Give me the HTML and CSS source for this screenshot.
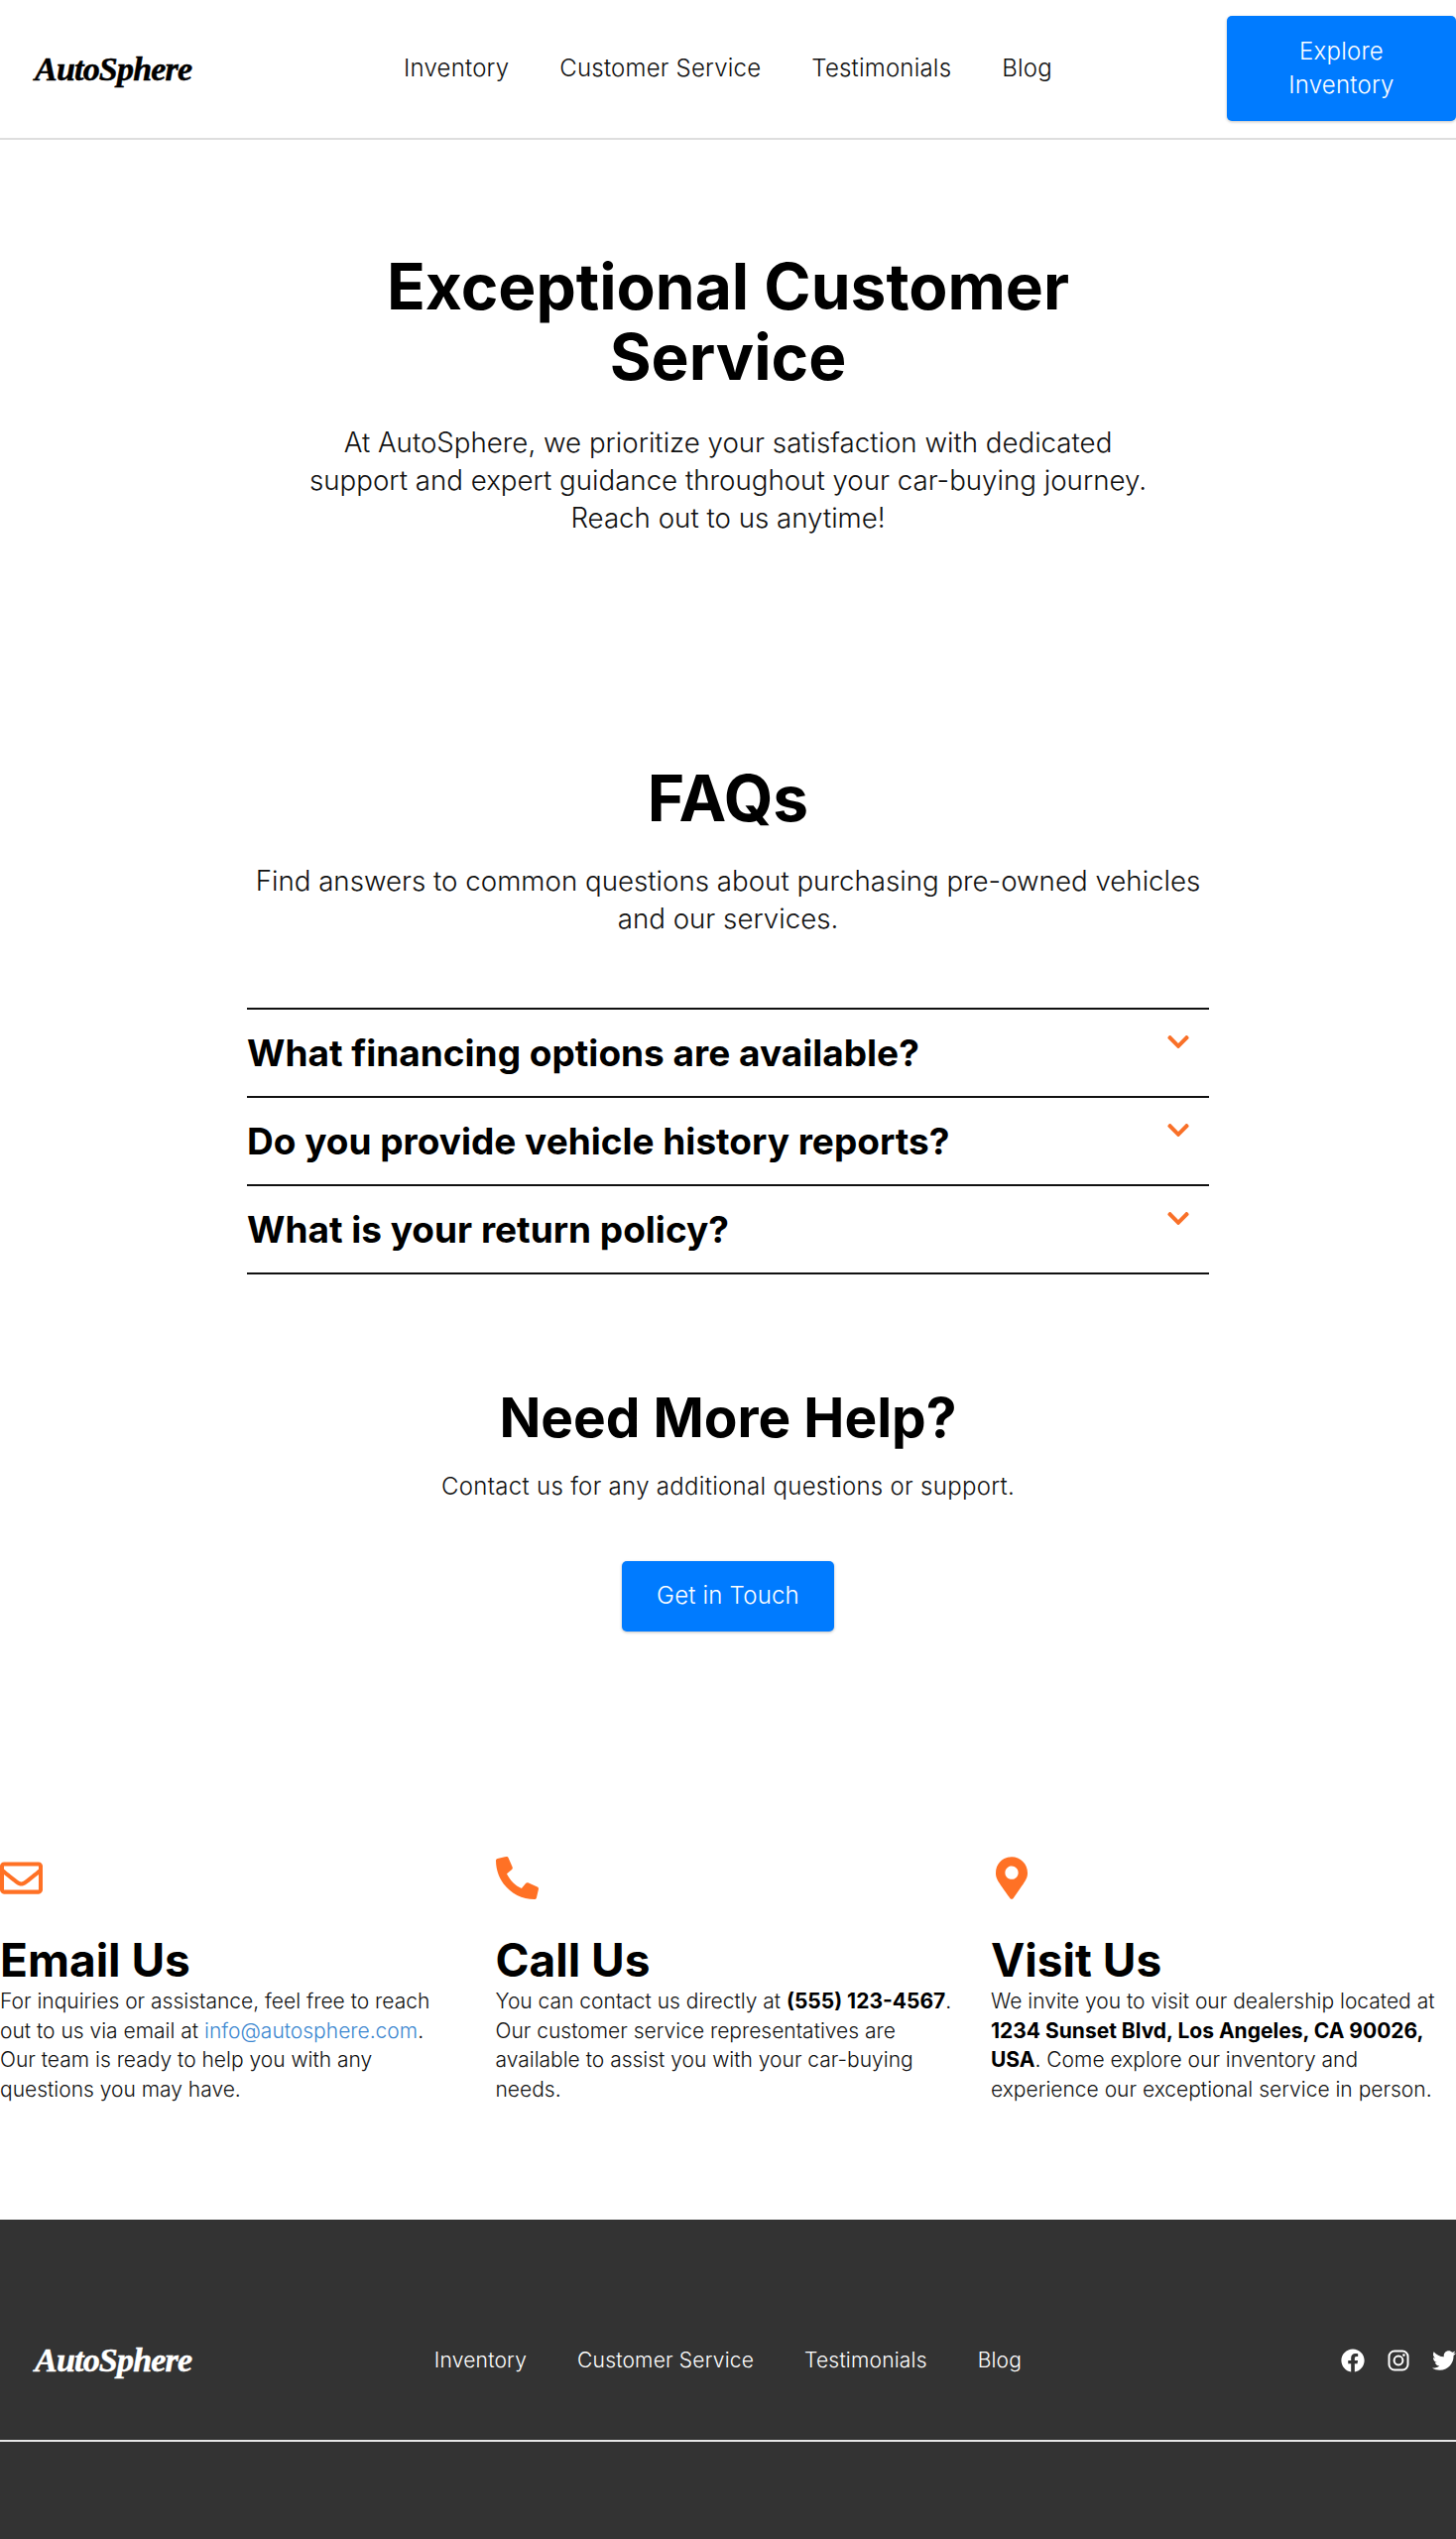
FILE: index.html
```html
<!DOCTYPE html>
<html lang="en">
<head>
    <meta charset="UTF-8">
    <meta name="viewport" content="width=device-width, initial-scale=1.0">
    <title>AutoSphere - Customer Service</title>
    <link rel="stylesheet" href="styles.css">
</head>
<body>
    <header class="navbar">
        <a class="logo" href="#">AutoSphere</a>
        <nav class="nav-links">
            <a href="#">Inventory</a>
            <a href="#">Customer Service</a>
            <a href="#">Testimonials</a>
            <a href="#">Blog</a>
        </nav>
        <a class="btn btn-nav" href="#">Explore Inventory</a>
    </header>

    <section class="hero">
        <h1>Exceptional Customer Service</h1>
        <p>At AutoSphere, we prioritize your satisfaction with dedicated support and expert guidance throughout your car-buying journey. Reach out to us anytime!</p>
    </section>

    <section class="faq">
        <h2>FAQs</h2>
        <p class="faq-intro">Find answers to common questions about purchasing pre-owned vehicles and our services.</p>
        <div class="faq-list">
            <div class="faq-item">
                <h3>What financing options are available?</h3>
                <svg class="chevron" viewBox="0 0 448 512"><path d="M207.029 381.476L12.686 187.132c-9.373-9.373-9.373-24.569 0-33.941l22.667-22.667c9.357-9.357 24.522-9.375 33.901-.04L224 284.505l154.745-154.021c9.379-9.335 24.544-9.317 33.901.04l22.667 22.667c9.373 9.373 9.373 24.569 0 33.941L240.971 381.476c-9.373 9.372-24.569 9.372-33.942 0z"/></svg>
            </div>
            <div class="faq-item">
                <h3>Do you provide vehicle history reports?</h3>
                <svg class="chevron" viewBox="0 0 448 512"><path d="M207.029 381.476L12.686 187.132c-9.373-9.373-9.373-24.569 0-33.941l22.667-22.667c9.357-9.357 24.522-9.375 33.901-.04L224 284.505l154.745-154.021c9.379-9.335 24.544-9.317 33.901.04l22.667 22.667c9.373 9.373 9.373 24.569 0 33.941L240.971 381.476c-9.373 9.372-24.569 9.372-33.942 0z"/></svg>
            </div>
            <div class="faq-item">
                <h3>What is your return policy?</h3>
                <svg class="chevron" viewBox="0 0 448 512"><path d="M207.029 381.476L12.686 187.132c-9.373-9.373-9.373-24.569 0-33.941l22.667-22.667c9.357-9.357 24.522-9.375 33.901-.04L224 284.505l154.745-154.021c9.379-9.335 24.544-9.317 33.901.04l22.667 22.667c9.373 9.373 9.373 24.569 0 33.941L240.971 381.476c-9.373 9.372-24.569 9.372-33.942 0z"/></svg>
            </div>
        </div>
    </section>

    <section class="help">
        <h2>Need More Help?</h2>
        <p>Contact us for any additional questions or support.</p>
        <a class="btn btn-touch" href="#">Get in Touch</a>
    </section>

    <section class="contact">
        <div class="contact-card">
            <svg class="contact-icon" viewBox="0 0 512 512"><path d="M464 64H48C21.49 64 0 85.49 0 112v288c0 26.51 21.49 48 48 48h416c26.51 0 48-21.49 48-48V112c0-26.51-21.49-48-48-48zm0 48v40.805c-22.422 18.259-58.168 46.651-134.587 106.49-16.841 13.247-50.201 45.072-73.413 44.701-23.208.375-56.579-31.459-73.413-44.701C106.18 199.465 70.425 171.067 48 152.805V112h416zM48 400V214.398c22.914 18.251 55.409 43.862 104.938 82.646 21.857 17.205 60.134 55.186 103.062 54.955 42.717.231 80.509-37.199 103.053-54.947 49.528-38.783 82.032-64.401 104.947-82.653V400H48z"/></svg>
            <h3>Email Us</h3>
            <p>For inquiries or assistance, feel free to reach out to us via email at <a href="#">info@autosphere.com</a>. Our team is ready to help you with any questions you may have.</p>
        </div>
        <div class="contact-card">
            <svg class="contact-icon flip" viewBox="0 0 512 512"><path d="M493.4 24.6l-104-24c-11.3-2.6-22.9 3.3-27.5 13.9l-48 112c-4.2 9.8-1.4 21.3 6.9 28l60.6 49.6c-36 76.7-98.9 140.5-177.2 177.2l-49.6-60.6c-6.8-8.3-18.2-11.1-28-6.9l-112 48C3.9 366.5-2 378.1.6 389.4l24 104C27.1 504.2 36.7 512 48 512c256.1 0 464-207.5 464-464 0-11.2-7.7-20.9-18.6-23.4z"/></svg>
            <h3>Call Us</h3>
            <p>You can contact us directly at <strong class="phone">(555) 123-4567</strong>. Our customer service representatives are available to assist you with your car-buying needs.</p>
        </div>
        <div class="contact-card">
            <svg class="contact-icon pin" viewBox="0 0 384 512"><path d="M172.268 501.67C26.97 291.031 0 269.413 0 192 0 85.961 85.961 0 192 0s192 85.961 192 192c0 77.413-26.97 99.031-172.268 309.67-9.535 13.774-29.93 13.773-39.464 0zM192 272c44.183 0 80-35.817 80-80s-35.817-80-80-80-80 35.817-80 80 35.817 80 80 80z"/></svg>
            <h3>Visit Us</h3>
            <p>We invite you to visit our dealership located at <strong>1234 Sunset Blvd, Los Angeles, CA 90026, USA</strong>. Come explore our inventory and experience our exceptional service in person.</p>
        </div>
    </section>

    <footer class="footer">
        <div class="footer-top">
            <a class="logo" href="#">AutoSphere</a>
            <nav class="footer-links">
                <a href="#">Inventory</a>
                <a href="#">Customer Service</a>
                <a href="#">Testimonials</a>
                <a href="#">Blog</a>
            </nav>
            <div class="socials">
                <svg viewBox="0 0 512 512"><path d="M504 256C504 119 393 8 256 8S8 119 8 256c0 123.78 90.69 226.38 209.25 245V327.69h-63V256h63v-54.64c0-62.15 37-96.48 93.67-96.48 27.14 0 55.52 4.84 55.52 4.84v61h-31.28c-30.8 0-40.41 19.12-40.41 38.73V256h68.78l-11 71.69h-57.78V501C413.31 482.38 504 379.78 504 256z"/></svg>
                <svg viewBox="0 0 24 24"><rect class="ig" x="2.5" y="2.5" width="19" height="19" rx="5.5"/><circle class="ig" cx="12" cy="12" r="4.4"/><circle cx="17.4" cy="6.6" r="1.3"/></svg>
                <svg viewBox="0 0 512 512"><path d="M459.37 151.716c.325 4.548.325 9.097.325 13.645 0 138.72-105.583 298.558-298.558 298.558-59.452 0-114.68-17.219-161.137-47.106 8.447.974 16.568 1.299 25.34 1.299 49.055 0 94.213-16.568 130.274-44.832-46.132-.975-84.792-31.188-98.112-72.772 6.498.974 12.995 1.624 19.818 1.624 9.421 0 18.843-1.3 27.614-3.573-48.081-9.747-84.143-51.98-84.143-102.985v-1.299c13.969 7.797 30.214 12.67 47.431 13.319-28.264-18.843-46.781-51.005-46.781-87.391 0-19.492 5.197-37.36 14.294-52.954 51.655 63.675 129.3 105.258 216.365 109.807-1.624-7.797-2.599-15.918-2.599-24.04 0-57.828 46.782-104.934 104.934-104.934 30.213 0 57.502 12.67 76.67 33.137 23.715-4.548 46.456-13.32 66.599-25.34-7.798 24.366-24.366 44.833-46.132 57.827 21.117-2.273 41.584-8.122 60.426-16.243-14.292 20.791-32.161 39.308-52.628 54.253z"/></svg>
            </div>
        </div>
        <div class="footer-line"></div>
    </footer>
</body>
</html>
```

FILE: styles.css
```css
* {
    box-sizing: border-box;
}

body {
    margin: 0;
    background-color: #fff;
    color: #000;
    font-family: Inter, "Open Sans", sans-serif;
    overflow-x: hidden;
}

a {
    color: inherit;
    text-decoration: none;
}

h1, h2, h3, p {
    margin: 0;
}

.logo {
    justify-self: start;
    margin-left: 35px;
    font-family: "Liberation Serif", serif;
    font-style: italic;
    font-weight: 700;
    font-size: 34px;
    letter-spacing: -0.8px;
    line-height: 1;
    -webkit-text-stroke: 0.5px currentColor;
}

.navbar {
    display: grid;
    grid-template-columns: 1fr auto 1fr;
    align-items: center;
    height: 141px;
    border-bottom: 2px solid #dedede;
}

.nav-links {
    display: flex;
    gap: 51px;
    font-size: 24px;
    font-weight: 300;
    letter-spacing: 0.2px;
    color: #111;
    margin-bottom: 2px;
}

.btn {
    display: block;
    background-color: #007bff;
    color: #fff;
    font-weight: 300;
    letter-spacing: 0.2px;
    text-align: center;
    border-radius: 5px;
    box-shadow: 0 1px 3px rgba(0, 0, 0, 0.25);
}

.btn-nav {
    justify-self: end;
    width: 231px;
    height: 106px;
    padding: 19px 40px;
    font-size: 24px;
    line-height: 34px;
    margin-bottom: 2px;
}

.hero {
    padding-top: 112px;
    text-align: center;
}

.hero h1 {
    width: 800px;
    margin: 0 auto;
    font-size: 64px;
    line-height: 71px;
    font-weight: 700;
}

.hero p {
    width: 852px;
    margin: 32px auto 0;
    font-size: 27.7px;
    font-weight: 300;
    line-height: 38px;
    color: #111;
}

.faq {
    padding-top: 228px;
    text-align: center;
}

.faq h2 {
    font-size: 64px;
    line-height: 71px;
    font-weight: 700;
}

.faq-intro {
    width: 970px;
    margin: 29px auto 0;
    font-size: 27.7px;
    font-weight: 300;
    line-height: 38px;
    color: #111;
}

.faq-list {
    width: 970px;
    margin: 71px auto 0;
    border-top: 2px solid #111;
    text-align: left;
}

.faq-item {
    display: flex;
    justify-content: space-between;
    height: 89px;
    padding-right: 20px;
    border-bottom: 2px solid #111;
}

.faq-item h3 {
    font-size: 37px;
    line-height: 48px;
    font-weight: 700;
    padding-top: 20px;
}

.chevron {
    flex: none;
    width: 22px;
    height: 25px;
    margin-top: 20px;
    fill: #f97028;
}

.help {
    padding-top: 113px;
    text-align: center;
}

.help h2 {
    font-size: 55px;
    line-height: 62px;
    font-weight: 700;
}

.help p {
    margin-top: 21px;
    font-size: 24px;
    font-weight: 300;
    letter-spacing: 0.3px;
    line-height: 36px;
    color: #111;
}

.btn-touch {
    width: 214px;
    height: 71px;
    margin: 57px auto 0;
    font-size: 24px;
    line-height: 69px;
}

.contact {
    display: grid;
    grid-template-columns: repeat(3, 460px);
    gap: 39.5px;
    padding-top: 227px;
}

.contact-icon {
    display: block;
    width: 43px;
    height: 43px;
    fill: #ff7125;
}

.contact-icon.flip {
    transform: scaleX(-1);
}

.contact-icon.pin {
    width: 32px;
    margin-left: 5px;
}

.contact-card h3 {
    margin-top: 34px;
    font-size: 46px;
    line-height: 54px;
    font-weight: 700;
}

.contact-card p {
    font-size: 21px;
    font-weight: 300;
    line-height: 29.7px;
    color: #111;
}

.contact-card strong {
    color: #000;
    font-weight: 700;
}

.contact-card .phone {
    white-space: nowrap;
}

.contact-card a {
    color: #3c87d0;
}

.footer {
    margin-top: 116px;
    min-height: 340px;
    background-color: #333;
    color: #fff;
}

.footer-top {
    display: grid;
    grid-template-columns: 1fr auto 1fr;
    align-items: center;
    height: 222px;
    padding-top: 62px;
}

.footer-links {
    display: flex;
    gap: 51px;
    font-size: 21px;
    font-weight: 300;
    letter-spacing: 0.2px;
}

.socials {
    justify-self: end;
    display: flex;
    gap: 22px;
}

.socials svg {
    display: block;
    width: 24px;
    height: 24px;
    fill: #fff;
}

.socials .ig {
    fill: none;
    stroke: #fff;
    stroke-width: 2;
}

.footer-line {
    height: 2px;
    background-color: #e8e8e8;
}
```
